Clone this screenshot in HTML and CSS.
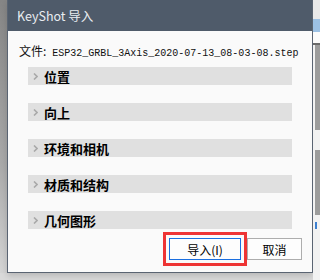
FILE: index.html
```html
<!DOCTYPE html>
<html lang="zh-CN">
<head>
    <meta charset="UTF-8">
    <title>KeyShot 导入</title>
    <link rel="stylesheet" href="styles.css">
</head>
<body>
    <div class="desk">
        <div class="side-left"></div>

        <div class="dialog">
            <div class="titlebar">KeyShot 导入</div>

            <div class="file">
                <span class="file-label">文件:</span><span class="file-name">ESP32_GRBL_3Axis_2020-07-13_08-03-08.step</span>
            </div>

            <div class="sections">
                <div class="section">
                    <svg class="chev" width="5" height="7" viewBox="0 0 5 7"><polyline points="1,0.5 4,3.5 1,6.5" fill="none" stroke="#a9a9a9" stroke-width="1.6"/></svg>
                    <span>位置</span>
                </div>
                <div class="section">
                    <svg class="chev" width="5" height="7" viewBox="0 0 5 7"><polyline points="1,0.5 4,3.5 1,6.5" fill="none" stroke="#a9a9a9" stroke-width="1.6"/></svg>
                    <span>向上</span>
                </div>
                <div class="section">
                    <svg class="chev" width="5" height="7" viewBox="0 0 5 7"><polyline points="1,0.5 4,3.5 1,6.5" fill="none" stroke="#a9a9a9" stroke-width="1.6"/></svg>
                    <span>环境和相机</span>
                </div>
                <div class="section">
                    <svg class="chev" width="5" height="7" viewBox="0 0 5 7"><polyline points="1,0.5 4,3.5 1,6.5" fill="none" stroke="#a9a9a9" stroke-width="1.6"/></svg>
                    <span>材质和结构</span>
                </div>
                <div class="section">
                    <svg class="chev" width="5" height="7" viewBox="0 0 5 7"><polyline points="1,0.5 4,3.5 1,6.5" fill="none" stroke="#a9a9a9" stroke-width="1.6"/></svg>
                    <span>几何图形</span>
                </div>
            </div>

            <div class="buttons">
                <button class="btn btn-primary">导入(I)</button>
                <button class="btn">取消</button>
            </div>
        </div>

        <div class="side-right">
            <div class="r-top"></div>
            <div class="r-blue"></div>
            <div class="r-white"></div>
            <div class="r-dots"></div>
            <div class="r-img"></div>
            <div class="r-gap"></div>
            <div class="r-img r-img2"></div>
            <div class="r-mark"></div>
        </div>
    </div>
</body>
</html>
```

FILE: styles.css
```css
body {
    margin: 0;
    background-color: #d9d9d9;
    font-family: "Noto Sans CJK SC", "Noto Sans", sans-serif;
}

.desk {
    display: flex;
    width: 320px;
    height: 280px;
    overflow: hidden;
}

.side-left {
    width: 7px;
    height: 273px;
    background: linear-gradient(to bottom, #858585, #a9a9a9 60%, #d4d4d4);
}

.dialog {
    width: 306px;
    height: 273px;
    box-sizing: border-box;
    border: 1px solid #5a6472;
    border-top: none;
    background-color: #fafafa;
    display: flex;
    flex-direction: column;
    box-shadow: 0 3px 6px rgba(0, 0, 0, 0.15);
}

.titlebar {
    height: 31px;
    line-height: 31px;
    background-color: #4f5b6a;
    color: #e9edf1;
    font-size: 12.5px;
    padding-left: 9px;
}

.file {
    margin: 11px 0 0 11px;
    height: 14px;
    line-height: 14px;
    color: #111;
    white-space: nowrap;
}

.file-label {
    font-size: 12px;
    margin-right: 6px;
}

.file-name {
    font-family: "Liberation Mono", monospace;
    font-size: 10px;
}

.sections {
    display: flex;
    flex-direction: column;
    gap: 18px;
    margin: 11px 20px 0 20px;
}

.section {
    height: 18px;
    background-color: #e0e0e0;
    display: flex;
    align-items: center;
    font-size: 13px;
    font-weight: bold;
    color: #000;
}

.chev {
    margin: 0 6px 0 5px;
}

.buttons {
    display: flex;
    justify-content: flex-end;
    gap: 6px;
    margin-top: 9px;
    padding-right: 10px;
}

.btn {
    height: 22px;
    width: 55px;
    padding: 0;
    border: 1px solid #adadad;
    background-color: #fdfdfd;
    font-family: "Noto Sans CJK SC", sans-serif;
    font-size: 12px;
    color: #000;
}

.btn-primary {
    width: 72px;
    border-color: #1a6fe0;
    outline: 3px solid #ee3434;
    outline-offset: 3px;
}

.side-right {
    width: 7px;
    height: 280px;
    background-color: #f2f2f2;
    display: flex;
    flex-direction: column;
}

.r-top {
    height: 19px;
    background-color: #e9e9e9;
}

.r-blue {
    height: 13px;
    background-color: #9cc1e4;
}

.r-white {
    height: 11px;
    background-color: #fbfbfb;
}

.r-dots {
    height: 2px;
    background-color: #6a6a6a;
}

.r-img {
    height: 85px;
    margin-left: 2px;
    background-color: #9c9c9c;
}

.r-gap {
    height: 20px;
}

.r-img2 {
    height: 65px;
}

.r-mark {
    height: 7px;
    width: 2px;
    margin: 7px 0 0 2px;
    background-color: #3c7fd0;
}
```
